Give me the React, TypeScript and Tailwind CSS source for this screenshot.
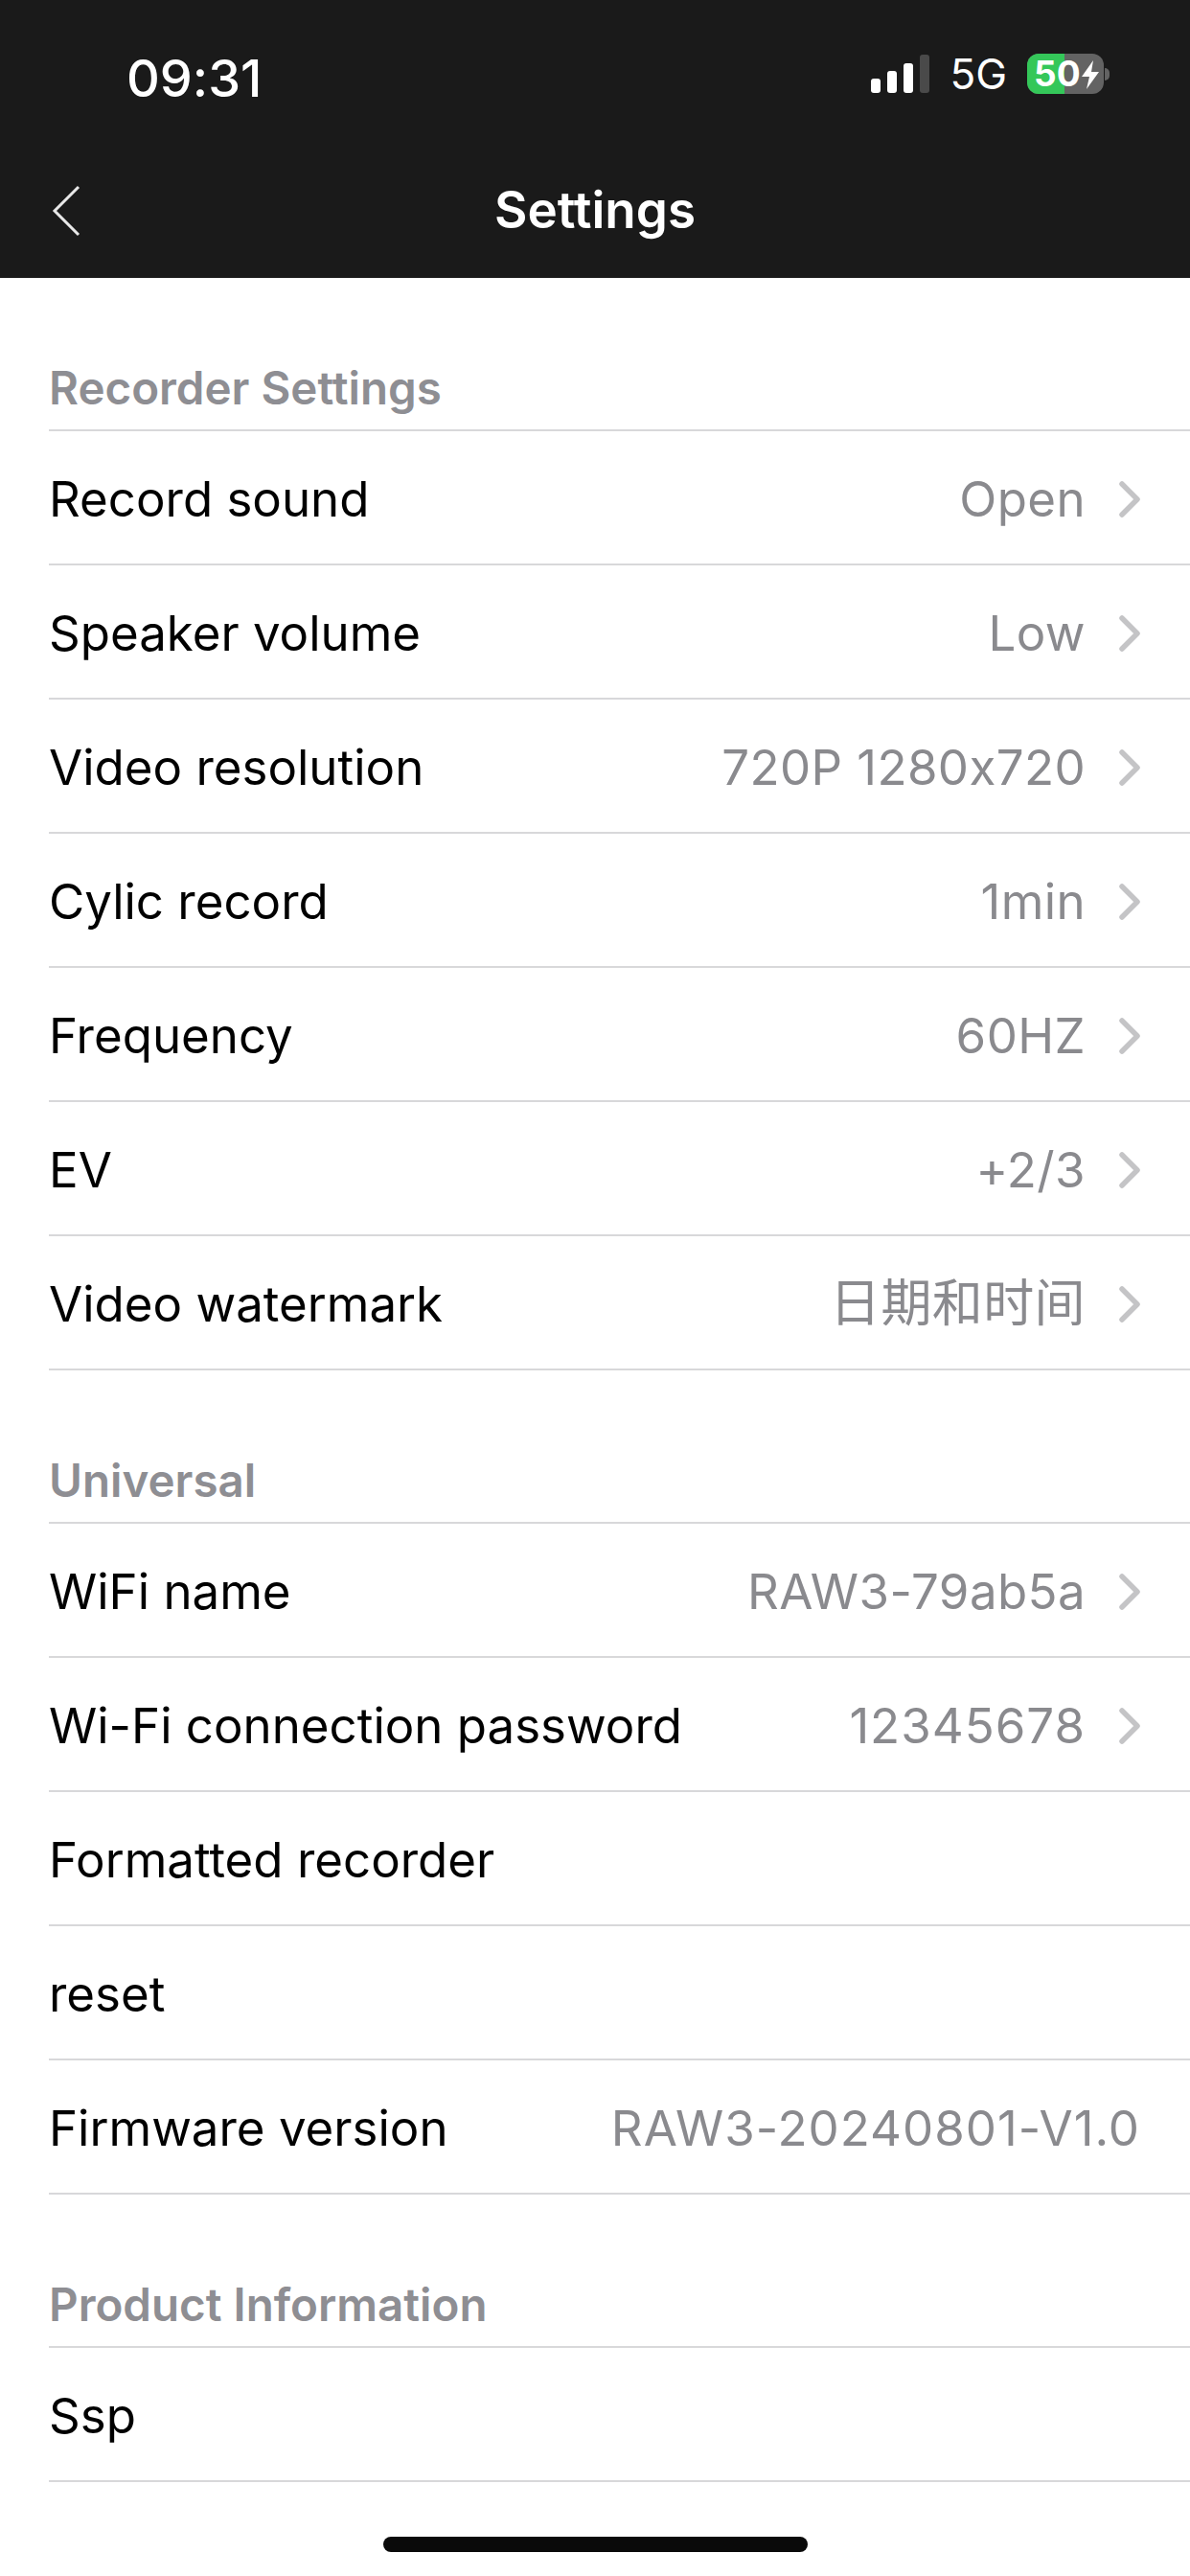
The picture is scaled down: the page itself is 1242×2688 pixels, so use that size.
import type { ReactNode } from 'react';

const ChevronRight = () => (
  <svg width="22" height="38" viewBox="0 0 22 38" fill="none" className="shrink-0">
    <path d="M3 3 L19 19 L3 35" stroke="#c4c4c6" strokeWidth="5.5" strokeLinecap="round" strokeLinejoin="round" />
  </svg>
);

type RowProps = { label: string; value?: ReactNode; arrow?: boolean };

const Row = ({ label, value, arrow = true }: RowProps) => (
  <div className="flex h-[140px] items-center justify-between border-b-2 border-[#d8d8da] pr-[52px] pt-[3px]">
    <span className="text-[51px] leading-none text-black">{label}</span>
    {value && (
      <div className="flex items-center gap-[35px]">
        <span className="text-[51px] leading-none tracking-[0.4px] text-[#8a8a8e]">{value}</span>
        {arrow && <ChevronRight />}
      </div>
    )}
  </div>
);

const SectionTitle = ({ title }: { title: string }) => (
  <div className="flex h-[160px] items-end border-b-2 border-[#d8d8da] pb-[20px]">
    <span className="text-[47.5px] leading-none font-semibold text-[#8e8e93]">{title}</span>
  </div>
);

const StatusBar = () => (
  <div className="flex h-[144px] items-start justify-between pl-[132px] pr-[84px] pt-[54px]">
    <span className="text-[54px] leading-[56px] font-medium text-white">09:31</span>
    <div className="flex items-center pt-[1px]">
      <svg width="62" height="40" viewBox="0 0 62 40">
        <rect x="0" y="25" width="10" height="15" rx="3" fill="#fff" />
        <rect x="17" y="17" width="10" height="23" rx="3" fill="#fff" />
        <rect x="34" y="9" width="10" height="31" rx="3" fill="#fff" />
        <rect x="51" y="0" width="10" height="40" rx="3" fill="#4a4a4a" />
      </svg>
      <span className="ml-[20px] text-[44px] leading-none text-white">5G</span>
      <div className="relative ml-[21px] h-[42px] w-[80px] rounded-[12px] bg-[#636363]">
        <div className="h-full w-[39px] rounded-l-[12px] bg-[#34c759]" />
        <span className="absolute left-[7px] top-[2px] text-[37px] leading-[37px] font-bold text-white">50</span>
        <svg width="20" height="30" viewBox="0 0 20 30" className="absolute left-[56px] top-[7px]">
          <path d="M13 0 L1 17 H9 L6 30 L19 12 H11 Z" fill="#fff" />
        </svg>
      </div>
      <div className="ml-[1px] h-[13px] w-[5px] rounded-r-full bg-[#636363]" />
    </div>
  </div>
);

const NavBar = () => (
  <div className="relative flex h-[146px] items-center justify-center pt-[4px]">
    <svg width="30" height="54" viewBox="0 0 30 54" fill="none" className="absolute left-[54px] top-[49px]">
      <path d="M28 2 L3 27 L28 52" stroke="#e8e8e8" strokeWidth="3" />
    </svg>
    <span className="text-[53px] leading-none font-semibold text-white">Settings</span>
  </div>
);

const App = () => {
  return (
    <div className="relative h-[2688px] w-[1242px] overflow-hidden bg-white font-['Inter','Noto_Sans_CJK_SC',sans-serif] [font-feature-settings:'calt'_0]">
      <div className="bg-[#1a1a1a]">
        <StatusBar />
        <NavBar />
      </div>
      <div className="pl-[51px]">
        <SectionTitle title="Recorder Settings" />
        <Row label="Record sound" value="Open" />
        <Row label="Speaker volume" value="Low" />
        <Row label="Video resolution" value="720P 1280x720" />
        <Row label="Cylic record" value="1min" />
        <Row label="Frequency" value="60HZ" />
        <Row label="EV" value="+2/3" />
        <Row label="Video watermark" value={<span className="text-[53px]">日期和时间</span>} />

        <SectionTitle title="Universal" />
        <Row label="WiFi name" value="RAW3-79ab5a" />
        <Row label="Wi-Fi connection password" value={<span className="tracking-[1px]">12345678</span>} />
        <Row label="Formatted recorder" />
        <Row label="reset" />
        <Row label="Firmware version" value={<span className="tracking-[1px]">RAW3-20240801-V1.0</span>} arrow={false} />

        <SectionTitle title="Product Information" />
        <Row label="Ssp" />
      </div>
      <div className="absolute bottom-[25px] left-[400px] h-[16px] w-[443px] rounded-full bg-[#0a0a0a]" />
    </div>
  );
};

export default App;
